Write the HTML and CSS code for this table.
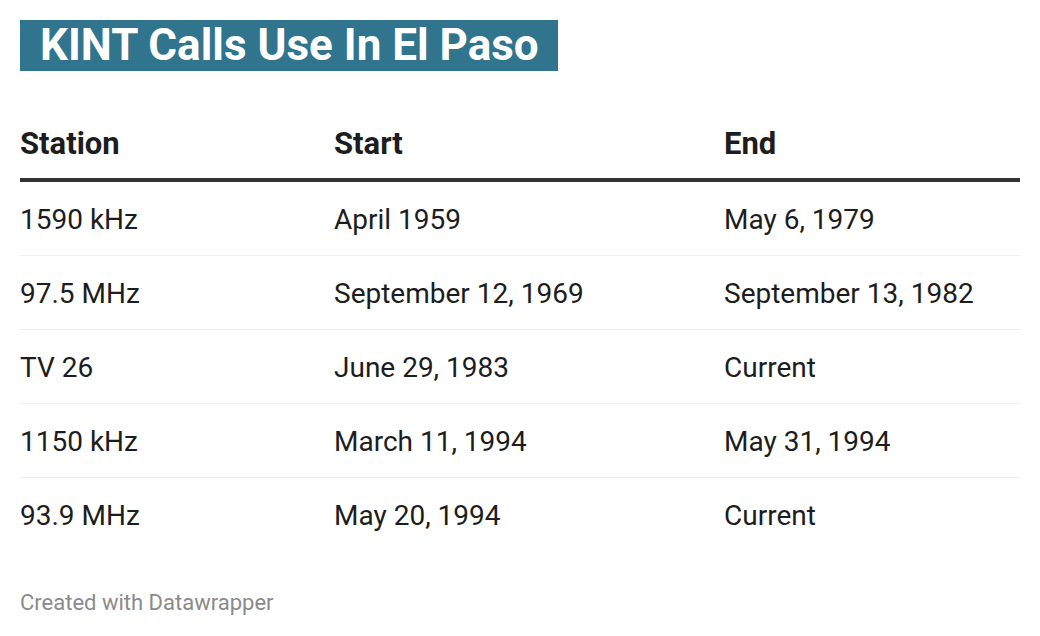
FILE: index.html
```html
<!DOCTYPE html>
<html>
<head>
<meta charset="utf-8">
<link rel="stylesheet" href="styles.css">
</head>
<body>
<div class="chart">
  <div class="title-wrap"><h1 class="title">KINT Calls Use In El Paso</h1></div>
  <table class="tbl">
    <thead>
      <tr><th class="c1">Station</th><th class="c2">Start</th><th class="c3">End</th></tr>
    </thead>
    <tbody>
      <tr><td>1590 kHz</td><td>April 1959</td><td>May 6, 1979</td></tr>
      <tr><td>97.5 MHz</td><td>September 12, 1969</td><td>September 13, 1982</td></tr>
      <tr><td>TV 26</td><td>June 29, 1983</td><td>Current</td></tr>
      <tr><td>1150 kHz</td><td>March 11, 1994</td><td>May 31, 1994</td></tr>
      <tr><td>93.9 MHz</td><td>May 20, 1994</td><td>Current</td></tr>
    </tbody>
  </table>
  <div class="footer">Created with Datawrapper</div>
</div>
</body>
</html>
```
FILE: styles.css
```css
html, body {
  margin: 0;
  padding: 0;
  background: #ffffff;
}
body {
  font-family: Roboto, "Liberation Sans", sans-serif;
  color: #1d1d1d;
}
.chart {
  padding: 20px 20px 0 20px;
}
.title-wrap {
  display: flex;
}
.title {
  margin: 0;
  background: #30748e;
  color: #ffffff;
  font-size: 44px;
  font-weight: 700;
  line-height: 51px;
  height: 51px;
  padding: 0 19px 0 20px;
}
.tbl {
  width: 1000px;
  border-collapse: collapse;
  margin-top: 49px;
}
.tbl th {
  text-align: left;
  font-weight: 700;
  font-size: 31px;
  line-height: 48px;
  padding: 0 0 10px 0;
  border-bottom: 4px solid #333333;
}
.c1 { width: 314px; }
.c2 { width: 390px; }
.tbl td {
  font-size: 28px;
  line-height: 30px;
  padding: 23px 0 20px 0;
  border-bottom: 1px solid #eeeeee;
  color: #1d1d1d;
}
.tbl tbody tr:last-child td {
  border-bottom: none;
}
.footer {
  margin-top: 39px;
  font-size: 22px;
  color: #8a8a8a;
}
```
